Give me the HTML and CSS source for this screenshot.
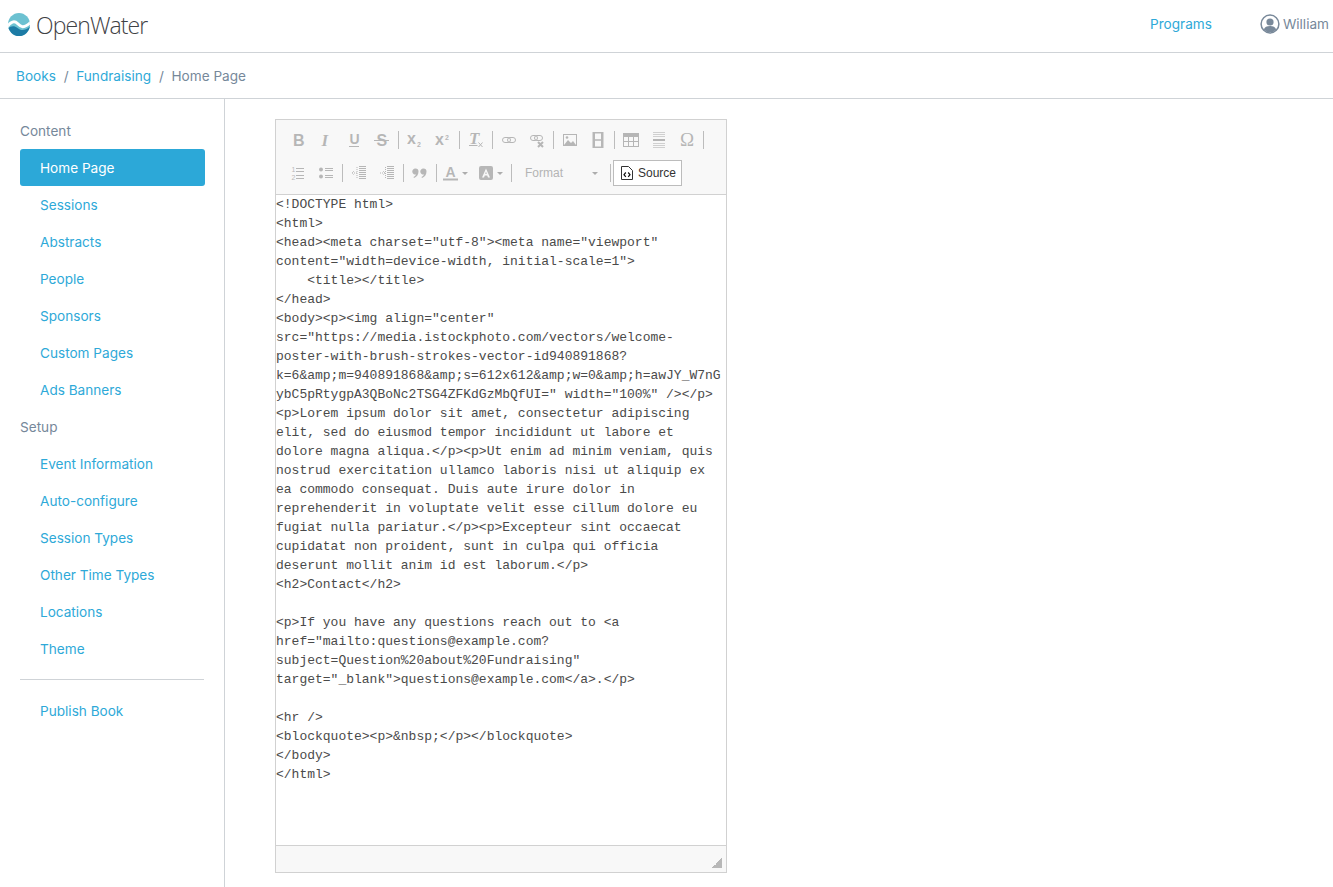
FILE: index.html
```html
<!DOCTYPE html>
<html lang="en">
<head>
<meta charset="utf-8">
<title>Home Page</title>
<link rel="stylesheet" href="styles.css">
</head>
<body>
<header class="topbar">
  <a class="brand" href="#">
    <svg class="brand-mark" width="22" height="23" viewBox="0 0 22 23">
      <defs><clipPath id="mark"><ellipse cx="11" cy="11.500" rx="11" ry="11.500"/></clipPath></defs>
      <g clip-path="url(#mark)">
        <rect width="22" height="23" fill="#6cc1d1"/>
        <path fill="#1d7ba5" d="M0 15.500C3 12.500 6.500 12.500 9.500 15S16.500 18.500 22 13.500V23H0z"/>
        <path fill="none" stroke="#fff" stroke-width="3" d="M-1 14C2.500 8.500 6.500 7.500 9.500 10.500S15 16.500 23 9"/>
      </g>
    </svg>
    <span class="brand-name">OpenWater</span>
  </a>
  <nav class="topnav">
    <a class="link" href="#">Programs</a>
    <span class="user">
      <svg width="20" height="20" viewBox="0 0 20 20">
        <circle cx="10" cy="10" r="8.900" fill="#fff" stroke="#79899a" stroke-width="1.500"/>
        <circle cx="10" cy="8" r="3.600" fill="#79899a"/>
        <path fill="#79899a" d="M3.800 15.500c.8-2.600 3-3.600 6.200-3.600s5.400 1 6.200 3.600A8.300 8.300 0 0 1 10 18.300a8.300 8.300 0 0 1-6.200-2.800z"/>
      </svg>
      William
    </span>
  </nav>
</header>
<nav class="crumbs">
  <a class="link" href="#">Books</a><span class="crumb-sep">/</span><a class="link" href="#">Fundraising</a><span class="crumb-sep">/</span><span>Home Page</span>
</nav>
<div class="layout">
  <aside class="sidebar">
    <div class="side-head">Content</div>
    <a class="side-item active" href="#">Home Page</a>
    <a class="side-item" href="#">Sessions</a>
    <a class="side-item" href="#">Abstracts</a>
    <a class="side-item" href="#">People</a>
    <a class="side-item" href="#">Sponsors</a>
    <a class="side-item" href="#">Custom Pages</a>
    <a class="side-item" href="#">Ads Banners</a>
    <div class="side-head">Setup</div>
    <a class="side-item" href="#">Event Information</a>
    <a class="side-item" href="#">Auto-configure</a>
    <a class="side-item" href="#">Session Types</a>
    <a class="side-item" href="#">Other Time Types</a>
    <a class="side-item" href="#">Locations</a>
    <a class="side-item" href="#">Theme</a>
    <hr class="side-rule">
    <a class="side-item" href="#">Publish Book</a>
  </aside>
  <main class="content">
    <div class="editor">
      <div class="toolbar">
        <div class="tool-row">
          <span class="btn"><svg class="ico" viewBox="0 0 16 16"><text x="3" y="13.500" class="g-b">B</text></svg></span>
          <span class="btn"><svg class="ico" viewBox="0 0 16 16"><text x="3.500" y="13.500" class="g-i">I</text></svg></span>
          <span class="btn"><svg class="ico" viewBox="0 0 16 16"><text x="3.500" y="12" class="g-u">U</text><path class="s" d="M3 14.500h10"/></svg></span>
          <span class="btn"><svg class="ico" viewBox="0 0 16 16"><text x="2.500" y="13.500" class="g-b">S</text><path class="s" d="M0 8.500h15"/></svg></span>
          <span class="sep"></span>
          <span class="btn"><svg class="ico" viewBox="0 0 16 16"><text x="0" y="12" class="g-x">x</text><text x="10" y="15" class="g-sub">2</text></svg></span>
          <span class="btn"><svg class="ico" viewBox="0 0 16 16"><text x="0" y="13" class="g-x">x</text><text x="10" y="7.500" class="g-sub">2</text></svg></span>
          <span class="sep"></span>
          <span class="btn"><svg class="ico" viewBox="0 0 16 16"><text x="1" y="11.500" class="g-i">T</text><path class="s" d="M1 13.500h8.500"/><path class="s" d="M10.500 10.500l4 4.500M14.500 10.500l-4 4.500"/></svg></span>
          <span class="sep"></span>
          <span class="btn"><svg class="ico" viewBox="0 0 16 16"><rect class="s" x="1.500" y="5.500" width="8" height="5" rx="2.500"/><rect class="s" x="6.500" y="5.500" width="8" height="5" rx="2.500"/></svg></span>
          <span class="btn"><svg class="ico" viewBox="0 0 16 16"><rect class="s" x="1.500" y="3.500" width="7" height="5" rx="2.500"/><rect class="s" x="5.500" y="3.500" width="8" height="5" rx="2.500"/><path class="s thick" d="M9 10l5 5M14 10l-5 5"/></svg></span>
          <span class="sep"></span>
          <span class="btn"><svg class="ico" viewBox="0 0 16 16"><rect class="s" x="1.500" y="2.500" width="13" height="11"/><path class="f" d="M2 13l4-5 3 3 2-2 3 4z"/><circle class="f" cx="5" cy="5.500" r="1.300"/></svg></span>
          <span class="btn"><svg class="ico" viewBox="0 0 16 16"><path class="f" fill-rule="evenodd" d="M2.500 0h11v16h-11zM5 1.500v5.800h6V1.500zM5 8.700v5.800h6V8.700z"/></svg></span>
          <span class="sep"></span>
          <span class="btn"><svg class="ico" viewBox="0 0 16 16"><rect class="s" x=".5" y="1.500" width="15" height="13"/><path class="f" d="M1 2h14v3H1z"/><path class="s" d="M.5 9.500h15M5.500 5v9M10.500 5v9"/></svg></span>
          <span class="btn"><svg class="ico" viewBox="0 0 16 16"><path class="s lite" d="M2 .5h12M2 2.500h12M2 4.500h12M2 11.500h12M2 13.500h12M2 15.500h12"/><path class="s thick" d="M2 8h12"/></svg></span>
          <span class="btn"><svg class="ico" viewBox="0 0 16 16"><text x="1" y="14" class="g-o">Ω</text></svg></span>
          <span class="sep"></span>
        </div>
        <div class="tool-row">
          <span class="btn"><svg class="ico" viewBox="0 0 16 16"><path class="s" d="M6 3.500h8M6 6.500h8M6 10.500h8M6 13.500h8"/><text x="1.500" y="7" class="g-n">1</text><text x="1.500" y="14.500" class="g-n">2</text></svg></span>
          <span class="btn"><svg class="ico" viewBox="0 0 16 16"><path class="s" d="M7 3.500h8M7 5.500h8M7 10.500h8M7 12.500h8"/><circle class="f" cx="3" cy="4.500" r="2"/><circle class="f" cx="3" cy="11.500" r="2"/></svg></span>
          <span class="sep"></span>
          <span class="btn"><svg class="ico" viewBox="0 0 16 16"><path class="s thin" d="M8 1.500h7M8 3.500h7M8 5.500h7M8 7.500h7M8 9.500h7M8 11.500h7M8 13.500h7"/><path class="s thin" d="M6 8H1M3 6L1 8l2 2M6 2v12" stroke-dasharray="1 1"/></svg></span>
          <span class="btn"><svg class="ico" viewBox="0 0 16 16"><path class="s thin" d="M8 1.500h7M8 3.500h7M8 5.500h7M8 7.500h7M8 9.500h7M8 11.500h7M8 13.500h7"/><path class="s thin" d="M1 8h5M4 6l2 2-2 2M6.500 2v12" stroke-dasharray="1 1"/></svg></span>
          <span class="sep"></span>
          <span class="btn"><svg class="ico" viewBox="0 0 16 16"><path class="f" d="M3.500 3.500a3 3 0 0 1 3 3c0 3.500-2 5.500-4.500 6.500l-.5-1c1.300-.7 2.200-1.700 2.500-2.600a3 3 0 1 1-.5-5.900zM11.500 3.500a3 3 0 0 1 3 3c0 3.500-2 5.500-4.500 6.500l-.5-1c1.300-.7 2.200-1.700 2.500-2.600a3 3 0 1 1-.5-5.900z"/></svg></span>
          <span class="sep"></span>
          <span class="btn btn-color"><svg class="ico" viewBox="0 0 16 16"><text x="2.500" y="11.500" class="g-a">A</text><path class="s thick" d="M0 14.500h15"/></svg><i class="caret"></i></span>
          <span class="btn btn-color"><svg class="ico" viewBox="0 0 16 16"><path class="f" fill-rule="evenodd" d="M3 1h10a2 2 0 0 1 2 2v10a2 2 0 0 1-2 2H3a2 2 0 0 1-2-2V3a2 2 0 0 1 2-2zM8 3.500L4 12.500h2l.8-2h2.400l.8 2h2zM8 6.500l.7 2.500H7.300z"/></svg><i class="caret"></i></span>
          <span class="sep"></span>
          <span class="combo">Format<i class="caret"></i></span>
          <span class="sep"></span>
          <span class="source">
            <svg class="doc" width="12" height="14" viewBox="0 0 12 14"><path fill="none" stroke="#333" d="M.5.500h7l4 4v9H.5z"/><path fill="none" stroke="#111" stroke-width="1.200" d="M4.800 6.500L3 8.700l1.800 2.200M7.200 6.500L9 8.700l-1.800 2.200"/></svg>
            Source
          </span>
        </div>
      </div>
<pre class="code">&lt;!DOCTYPE html&gt;
&lt;html&gt;
&lt;head&gt;&lt;meta charset="utf-8"&gt;&lt;meta name="viewport"
content="width=device-width, initial-scale=1"&gt;
    &lt;title&gt;&lt;/title&gt;
&lt;/head&gt;
&lt;body&gt;&lt;p&gt;&lt;img align="center"
src="https://media.istockphoto.com/vectors/welcome-
poster-with-brush-strokes-vector-id940891868?
k=6&amp;amp;m=940891868&amp;amp;s=612x612&amp;amp;w=0&amp;amp;h=awJY_W7nG
ybC5pRtygpA3QBoNc2TSG4ZFKdGzMbQfUI=" width="100%" /&gt;&lt;/p&gt;
&lt;p&gt;Lorem ipsum dolor sit amet, consectetur adipiscing
elit, sed do eiusmod tempor incididunt ut labore et
dolore magna aliqua.&lt;/p&gt;&lt;p&gt;Ut enim ad minim veniam, quis
nostrud exercitation ullamco laboris nisi ut aliquip ex
ea commodo consequat. Duis aute irure dolor in
reprehenderit in voluptate velit esse cillum dolore eu
fugiat nulla pariatur.&lt;/p&gt;&lt;p&gt;Excepteur sint occaecat
cupidatat non proident, sunt in culpa qui officia
deserunt mollit anim id est laborum.&lt;/p&gt;
&lt;h2&gt;Contact&lt;/h2&gt;

&lt;p&gt;If you have any questions reach out to &lt;a
href="mailto:questions@example.com?
subject=Question%20about%20Fundraising"
target="_blank"&gt;questions@example.com&lt;/a&gt;.&lt;/p&gt;

&lt;hr /&gt;
&lt;blockquote&gt;&lt;p&gt;&amp;nbsp;&lt;/p&gt;&lt;/blockquote&gt;
&lt;/body&gt;
&lt;/html&gt;</pre>
      <div class="editor-foot"><i class="grip"></i></div>
    </div>
  </main>
</div>
</body>
</html>
```
FILE: styles.css
```css
* { box-sizing: border-box; }
html, body { height: 100%; }
body {
  margin: 0;
  background: #fff;
  color: #76889a;
  font: 13.6px/20px Inter, "Noto Sans", sans-serif;
  overflow: hidden;
  display: flex;
  flex-direction: column;
}
a { text-decoration: none; }
.link { color: #2ea9d8; }

.topbar {
  height: 53px;
  flex: none;
  border-bottom: 1px solid #cfd3d7;
  display: flex;
  align-items: center;
  justify-content: space-between;
  padding-left: 8px;
}
.brand { display: flex; align-items: center; gap: 6px; margin-top: -4px; }
.brand-mark { display: block; flex: none; }
.brand-name {
  font: 300 23px/30px "Open Sans", sans-serif;
  letter-spacing: -.9px;
  color: #3f4245;
  position: relative;
  top: 1px;
}
.topnav { display: flex; align-items: center; gap: 48px; margin-top: -5px; }
.user { display: flex; align-items: center; gap: 3px; margin-right: 4px; white-space: nowrap; }
.user svg { display: block; }

.crumbs {
  height: 46px;
  flex: none;
  border-bottom: 1px solid #cfd3d7;
  display: flex;
  align-items: center;
  padding-left: 16px;
}
.crumb-sep { margin: 0 7.500px 0 8px; }

.layout { flex: 1; display: flex; min-height: 0; }
.sidebar {
  width: 225px;
  flex: none;
  border-right: 1px solid #cfd3d7;
  padding: 13px 19px 0 20px;
}
.side-head { height: 37px; line-height: 38px; }
.side-item {
  display: block;
  height: 37px;
  line-height: 38px;
  padding-left: 20px;
  color: #2ea9d8;
  border-radius: 3px;
}
.side-item.active { background: #2ca8d8; color: #fff; }
.side-rule { border: 0; border-top: 1px solid #cfd3d7; margin: 12px 0 12px; width: 184px; }

.content { flex: 1; padding: 20px 0 14px 50px; min-width: 0; }
.editor {
  width: 452px;
  height: 754px;
  border: 1px solid #d1d1d1;
  display: flex;
  flex-direction: column;
}
.toolbar {
  height: 75px;
  flex: none;
  background: #f8f8f8;
  border-bottom: 1px solid #d1d1d1;
  padding: 7px 8px 0;
}
.tool-row { display: flex; align-items: center; height: 26px; margin-bottom: 7px; }
.btn { width: 28px; height: 26px; display: flex; align-items: center; justify-content: center; flex: none; }
.btn-color { width: 35px; justify-content: flex-start; padding-left: 4px; gap: 3px; }
.ico { width: 16px; height: 16px; display: block; opacity: .3; overflow: visible; flex: none; }
.sep { width: 1px; height: 18px; margin: 0 2px; background: #bcbcbc; flex: none; }
.ico text { fill: #222; }
.g-b { font: 700 16px "Liberation Sans", sans-serif; }
.g-i { font: italic 700 17px "Liberation Serif", serif; }
.g-u { font: 700 14px "Liberation Sans", sans-serif; }
.g-x { font: 700 16px "Liberation Sans", sans-serif; }
.g-sub { font: 700 7px "Liberation Sans", sans-serif; }
.g-n { font: 400 7px "Liberation Sans", sans-serif; }
.g-o { font: 400 19px "Liberation Serif", serif; }
.g-a { font: 700 14px "Liberation Sans", sans-serif; }
.s { fill: none; stroke: #222; stroke-width: 1; }
.s.thick { stroke-width: 2; }
.s.thin { stroke-width: 1; }
.s.lite { stroke-opacity: .6; }
.f { fill: #222; }
.caret {
  width: 0;
  height: 0;
  border-left: 3px solid transparent;
  border-right: 3px solid transparent;
  border-top: 3px solid rgba(0,0,0,.3);
  flex: none;
}
.combo {
  width: 94px;
  flex: none;
  display: flex;
  align-items: center;
  justify-content: space-between;
  padding: 0 10px 0 11px;
  font: 12px "Liberation Sans", sans-serif;
  color: #b4b4b4;
}
.source {
  width: 69px;
  height: 26px;
  flex: none;
  border: 1px solid #bcbcbc;
  background: #fff;
  display: flex;
  align-items: center;
  gap: 5px;
  padding-left: 7px;
  font: 12px "Liberation Sans", sans-serif;
  color: #333;
  white-space: nowrap;
}
.doc { flex: none; display: block; }
.code {
  flex: 1;
  margin: 0;
  padding: 0;
  background: #fff;
  color: #4a4a4a;
  font: 13px/19px "Liberation Mono", monospace;
  overflow: hidden;
  white-space: pre;
}
.editor-foot {
  height: 27px;
  flex: none;
  background: #f8f8f8;
  border-top: 1px solid #d1d1d1;
  position: relative;
}
.grip {
  position: absolute;
  right: 4px;
  bottom: 4px;
  width: 10px;
  height: 10px;
  background: linear-gradient(135deg, transparent 50%, #b8b8b8 50%);
}
```
